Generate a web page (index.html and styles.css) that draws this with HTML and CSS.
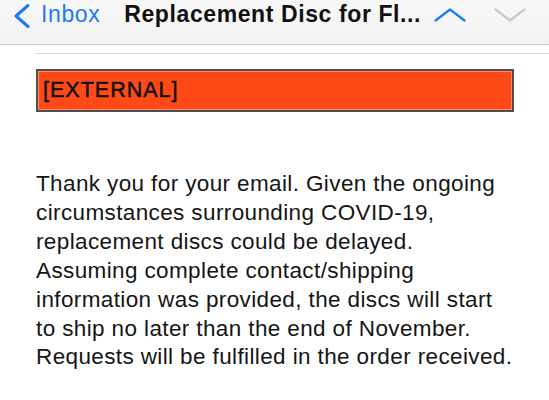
FILE: index.html
```html
<!DOCTYPE html>
<html>
<head>
<meta charset="utf-8">
<link rel="stylesheet" href="styles.css">
</head>
<body>
<header class="nav">
  <div class="back">
    <svg class="back-icon" width="18" height="24" viewBox="0 0 18 24"><path d="M15 1.5 L3 12 L15 22.5" fill="none" stroke="#1a7cf5" stroke-width="3" stroke-linecap="round" stroke-linejoin="round"/></svg>
    <span class="back-label">Inbox</span>
  </div>
  <div class="title">Replacement Disc for Fl...</div>
  <svg class="arrow up" width="32" height="14" viewBox="0 0 32 14"><path d="M1.5 12.5 L16 1.5 L30.5 12.5" fill="none" stroke="#1a7cf5" stroke-width="2.2" stroke-linecap="round" stroke-linejoin="round"/></svg>
  <svg class="arrow down" width="32" height="14" viewBox="0 0 32 14"><path d="M1.5 1.5 L16 12.5 L30.5 1.5" fill="none" stroke="#c9c9cc" stroke-width="2.2" stroke-linecap="round" stroke-linejoin="round"/></svg>
</header>
<main class="content">
  <div class="rule"></div>
  <div class="banner">[EXTERNAL]</div>
  <p class="body">Thank you for your email. Given the ongoing<br>circumstances surrounding COVID-19,<br>replacement discs could be delayed.<br>Assuming complete contact/shipping<br>information was provided, the discs will start<br>to ship no later than the end of November.<br>Requests will be fulfilled in the order received.</p>
</main>
</body>
</html>
```
FILE: styles.css
```css
html, body {
  margin: 0;
  padding: 0;
  background: #ffffff;
  font-family: "Liberation Sans", Arial, sans-serif;
  overflow: hidden;
}
.nav {
  height: 44px;
  border-bottom: 1px solid #cdcdcd;
  background: linear-gradient(#f8f8f8, #f2f2f2);
  display: flex;
  align-items: flex-start;
  padding-left: 13px;
}
.back {
  display: flex;
  align-items: flex-start;
}
.back-icon {
  display: block;
  margin-top: 4px;
}
.back-label {
  margin-left: 10px;
  margin-top: 1px;
  color: #1a7cf5;
  font-size: 23px;
  line-height: 26px;
  letter-spacing: 0.6px;
}
.title {
  margin-left: 24px;
  margin-top: 1px;
  font-size: 23px;
  line-height: 26px;
  font-weight: bold;
  color: #111;
  letter-spacing: 0.6px;
}
.arrow {
  display: block;
  margin-top: 8px;
}
.arrow.up {
  margin-left: 13px;
}
.arrow.down {
  margin-left: 28px;
}
.content {
  padding-left: 35px;
}
.rule {
  margin-top: 8px;
  height: 1px;
  background: #dcdcdc;
}
.banner {
  margin-top: 15px;
  margin-right: 35px;
  margin-left: 1px;
  height: 39px;
  background: #ff4a17;
  border: 2px solid #4f4f4f;
  box-shadow: inset 0 0 0 1px rgba(255, 255, 255, 0.35);
  font-size: 21.5px;
  line-height: 39px;
  padding-left: 5px;
  letter-spacing: 1px;
  color: #111;
  -webkit-text-stroke: 0.5px #111;
}
.body {
  margin: 58px 0 0 1px;
  font-size: 22.5px;
  line-height: 28.9px;
  letter-spacing: 0.38px;
  color: #151515;
}
```
